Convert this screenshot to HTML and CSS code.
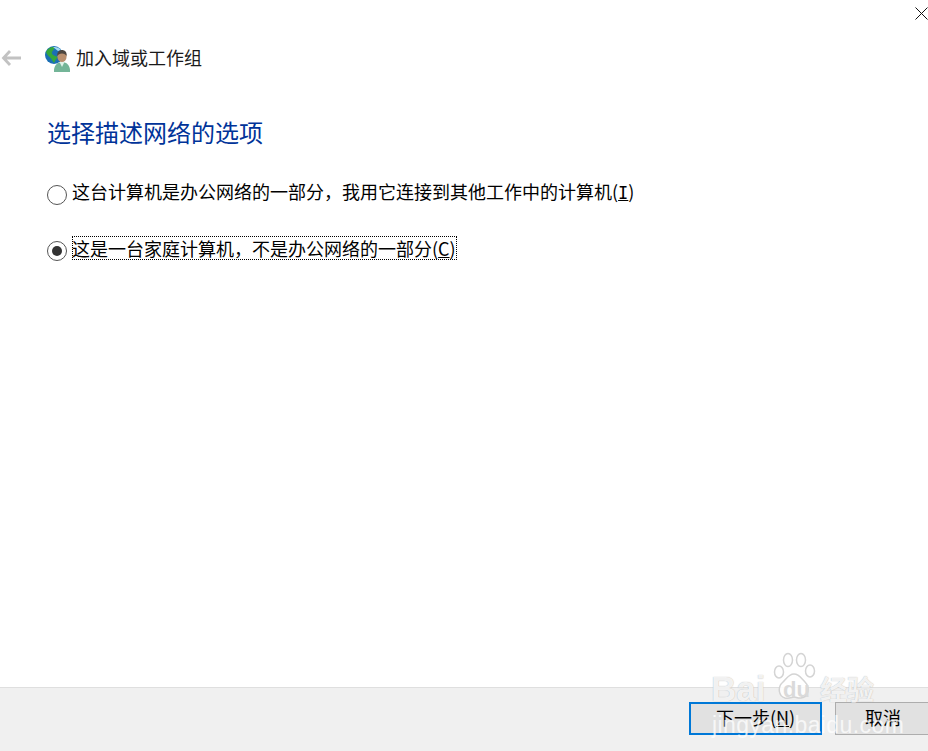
FILE: index.html
```html
<!DOCTYPE html>
<html lang="zh-CN">
<head>
<meta charset="utf-8">
<title>加入域或工作组</title>
<link rel="stylesheet" href="styles.css">
</head>
<body>
<div class="window">
  <main class="content">
    <header class="nav">
      <svg class="back" viewBox="0 0 20 16" width="20" height="16"><path d="M9 1 2.500 8 9 15M2.500 8H20" fill="none" stroke="#c2c2c2" stroke-width="2.800"/></svg>
      <svg class="netuser" viewBox="0 0 26 26" width="26" height="26">
        <circle cx="9" cy="9" r="9" fill="#1b6fb5"/>
        <path d="M1 6c2-4 5-5 8-5 1 2-1 3-2 5s2 4 6 5c-2 2-3 4-4 6l-2-3c-1-3-4-3-6-8z" fill="#35a83a"/>
        <path d="M8 1c3-.5 6 .5 8 3l-3 1z" fill="#a5dcf2"/>
        <path d="M9 26c-.5-6 3-10 8-10s8.500 4 8 10z" fill="#74b598"/>
        <path d="M14.500 16h5l-2.500 5z" fill="#dff2e8"/>
        <ellipse cx="17" cy="10.500" rx="4.600" ry="5.600" fill="#b98f6e"/>
        <path d="M12.300 10c-.5-4 2-6 4.700-6s5.200 2 4.600 6c-1-1.800-2.200-2.600-4.600-2.600s-3.700.8-4.700 2.600z" fill="#4d463f"/>
      </svg>
      <span class="nav-title">加入域或工作组</span>
    </header>
    <h1 class="heading">选择描述网络的选项</h1>
    <div class="options">
      <div class="option">
        <span class="radio"></span>
        <span class="label">这台计算机是办公网络的一部分，我用它连接到其他工作中的计算机(<u class="key-wide">I</u>)</span>
      </div>
      <div class="option selected">
        <span class="radio"><i class="dot"></i></span>
        <span class="label focus">这是一台家庭计算机，不是办公网络的一部分(<u>C</u>)</span>
      </div>
    </div>
  </main>
  <footer class="footer">
    <button class="btn primary">下一步(<u>N</u>)</button>
    <button class="btn cancel">取消</button>
  </footer>
  <button class="close" aria-label="关闭"><svg viewBox="0 0 13 13" width="13" height="13"><path d="M.5.500l12 12M12.500.500l-12 12" stroke="#111" stroke-width="1" fill="none"/></svg></button>
  <div class="watermark">
    <svg class="paw" viewBox="0 0 46 50" width="46" height="50">
      <g fill="#fff" stroke="#d0d0d0" stroke-width="1.500">
        <ellipse cx="7" cy="20" rx="4.500" ry="6"/>
        <ellipse cx="16" cy="8" rx="4.500" ry="6.500"/>
        <ellipse cx="29" cy="8" rx="4.500" ry="6.500"/>
        <ellipse cx="38" cy="19" rx="4.500" ry="6"/>
        <path d="M22 22c5 0 7 4 11 8 5 5 4 15-4 16-3 .4-5-1-7-1s-5 2-9 1c-7-2-7-11-3-15 4-3 6-9 12-9z"/>
      </g>
    </svg>
    <span class="wm-bai">Bai</span>
    <span class="wm-du">du</span>
    <span class="wm-jy">经验</span>
    <span class="wm-url">jingyan.baidu.com</span>
  </div>
</div>
</body>
</html>
```
FILE: styles.css
```css
* { box-sizing: border-box; }
html, body { margin: 0; height: 100%; }
body {
  font-family: "Noto Sans CJK SC", "Liberation Sans", sans-serif;
  color: #000;
  background: #fff;
  overflow: hidden;
}
.window {
  position: relative;
  display: flex;
  flex-direction: column;
  width: 928px;
  height: 751px;
  overflow: hidden;
}
.content { flex: 1; padding-left: 1px; }
.nav {
  display: flex;
  align-items: center;
  height: 26px;
  margin-top: 46px;
}
.back { margin-bottom: 3px; }
.netuser { margin-left: 24px; }
.nav-title {
  margin: 0 0 4px 5px;
  font-size: 18px;
  line-height: 24px;
  color: #1a1a1a;
}
.heading {
  margin: 44px 0 0 46px;
  font-size: 24px;
  line-height: 32px;
  font-weight: 400;
  color: #003399;
}
.options {
  display: flex;
  flex-direction: column;
  gap: 32px;
  margin: 32px 0 0 46px;
}
.option {
  display: flex;
  align-items: center;
  height: 24px;
  font-size: 18px;
  line-height: 24px;
}
.radio {
  display: flex;
  align-items: center;
  justify-content: center;
  flex: none;
  width: 20px;
  height: 20px;
  margin-top: 6px;
  border: 1.500px solid #555;
  border-radius: 50%;
  background: #fff;
}
.dot {
  width: 10px;
  height: 10px;
  border-radius: 50%;
  background: #333;
}
.label { margin-left: 5px; white-space: nowrap; }
.key-wide { font-family: "DejaVu Sans Mono", monospace; font-size: 17px; }
.focus { outline: 1px dotted #000; outline-offset: -1px; padding-right: 1px; }
.footer {
  display: flex;
  gap: 13px;
  height: 64px;
  padding: 14px 0 0 689px;
  background: #f0f0f0;
  border-top: 1px solid #dfdfdf;
}
.btn {
  flex: none;
  width: 133px;
  height: 33px;
  padding: 0 0 3px;
  font: inherit;
  font-size: 18px;
  line-height: 24px;
  color: #000;
  background: #e1e1e1;
  border: 1px solid #adadad;
}
.btn.primary { border: 2px solid #0078d7; }
.btn.cancel { width: 96px; }
.close {
  position: absolute;
  top: 7px;
  right: 0;
  width: 13px;
  height: 13px;
  padding: 0;
  border: 0;
  background: none;
  line-height: 0;
}
.watermark {
  position: absolute;
  left: 700px;
  top: 645px;
  width: 228px;
  height: 100px;
  color: rgba(255, 255, 255, .85);
  white-space: nowrap;
  text-shadow: 0 0 1px #aaa;
}
.watermark span { position: absolute; }
.paw { position: absolute; left: 72px; top: 7px; opacity: .9; }
.wm-bai {
  left: 11px;
  top: 24px;
  font: 700 35px/40px "Liberation Sans", sans-serif;
}
.wm-du {
  left: 83px;
  top: 31px;
  color: #dadada;
  font: 700 22px/28px "Liberation Sans", sans-serif;
  text-shadow: none;
}
.wm-jy {
  left: 120px;
  top: 26px;
  font: 700 27px/36px "Noto Sans CJK SC", sans-serif;
}
.wm-url {
  left: 12px;
  top: 66px;
  font: 400 23px/28px "Liberation Sans", sans-serif;
  letter-spacing: .4px;
  text-shadow: none;
  color: rgba(255, 255, 255, .75);
}
```
